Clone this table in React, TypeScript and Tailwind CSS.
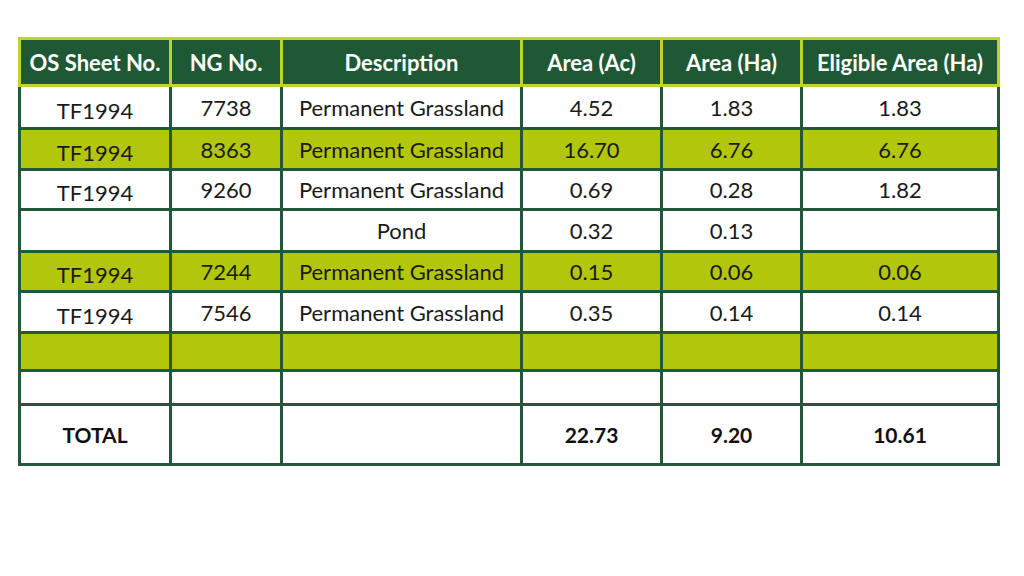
const cols = 'grid grid-cols-[148px_108px_237px_137px_137px_194px] gap-x-[3px]';

const headers = ['OS Sheet No.', 'NG No.', 'Description', 'Area (Ac)', 'Area (Ha)', 'Eligible Area (Ha)'];

type Row = { cells: string[]; lime?: boolean; h: string };

const rows: Row[] = [
  { cells: ['TF1994', '7738', 'Permanent Grassland', '4.52', '1.83', '1.83'], h: 'h-[40px]' },
  { cells: ['TF1994', '8363', 'Permanent Grassland', '16.70', '6.76', '6.76'], lime: true, h: 'h-[38px]' },
  { cells: ['TF1994', '9260', 'Permanent Grassland', '0.69', '0.28', '1.82'], h: 'h-[37px]' },
  { cells: ['', '', 'Pond', '0.32', '0.13', ''], h: 'h-[39px]' },
  { cells: ['TF1994', '7244', 'Permanent Grassland', '0.15', '0.06', '0.06'], lime: true, h: 'h-[37px]' },
  { cells: ['TF1994', '7546', 'Permanent Grassland', '0.35', '0.14', '0.14'], h: 'h-[38px]' },
  { cells: ['', '', '', '', '', ''], lime: true, h: 'h-[35px]' },
  { cells: ['', '', '', '', '', ''], h: 'h-[31px]' },
];

export default function App() {
  return (
    <div className="w-[1024px] h-[576px] bg-white pt-[37px] pl-[18px] font-['Lato','Open_Sans',sans-serif]">
      <div className="w-[982px]">
        {/* Header */}
        <div className={`${cols} bg-[#c0d22c] p-[3px]`}>
          {headers.map((h) => (
            <div key={h} className="h-[44px] bg-[#1f5834] text-white font-bold text-[22px] flex items-center justify-center">
              {h}
            </div>
          ))}
        </div>

        {/* Body */}
        <div className={`${cols} gap-y-[3px] bg-[#22573a] px-[3px] pb-[3px]`}>
          {rows.map((r, i) =>
            r.cells.map((c, j) => (
              <div
                key={`${i}-${j}`}
                className={`${r.h} ${r.lime ? 'bg-[#b2c60c]' : 'bg-white'} text-[#1a1a1a] text-[22px] flex items-center justify-center ${j === 0 ? 'pt-[6px]' : ''}`}
              >
                {c}
              </div>
            ))
          )}
          {['TOTAL', '', '', '22.73', '9.20', '10.61'].map((c, j) => (
            <div key={`t-${j}`} className="h-[57px] bg-white text-[#111] font-bold text-[21px] flex items-center justify-center">
              {c}
            </div>
          ))}
        </div>
      </div>
    </div>
  );
}
